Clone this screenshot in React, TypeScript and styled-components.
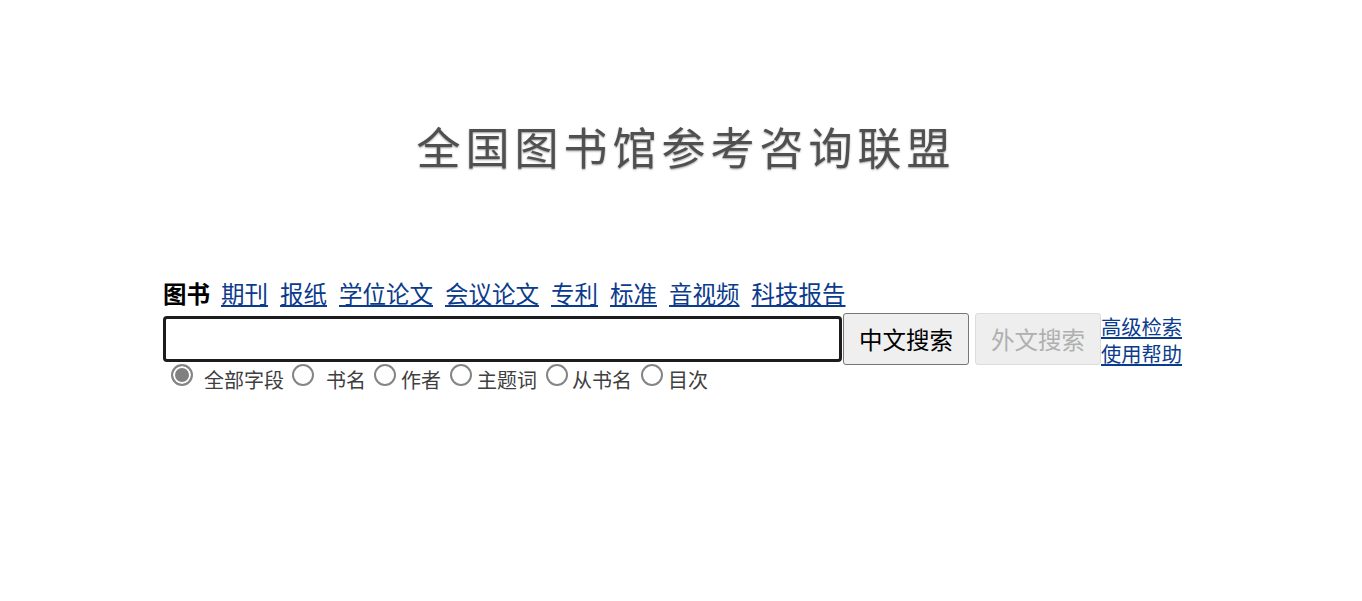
import React from 'react'
import styled, { createGlobalStyle } from 'styled-components'

const CJK = `"Liberation Sans", "Noto Sans CJK SC", sans-serif`

const channels = ['期刊', '报纸', '学位论文', '会议论文', '专利', '标准', '音视频', '科技报告']

const fields = [
	{ label: '全部字段', labelGap: 11, after: 8, checked: true, left: 8 },
	{ label: '书名', labelGap: 12, after: 8, checked: false, left: 0 },
	{ label: '作者', labelGap: 5, after: 9, checked: false, left: 0 },
	{ label: '主题词', labelGap: 5, after: 9, checked: false, left: 0 },
	{ label: '从书名', labelGap: 4, after: 9, checked: false, left: 0 },
	{ label: '目次', labelGap: 5, after: 0, checked: false, left: 0 },
]

const App: React.FC = () => {
	return (
		<Page>
			<GlobalStyle />
			<LogoRow>
				<Logo>全国图书馆参考咨询联盟</Logo>
			</LogoRow>
			<SearchArea>
				<Channels>
					<Current>图书</Current>
					{channels.map((c) => (
						<ChannelLink href="#" key={c}>
							{c}
						</ChannelLink>
					))}
				</Channels>
				<SearchRow>
					<SearchInput type="text" />
					<SearchButton type="button">中文搜索</SearchButton>
					<SearchButton type="button" disabled>
						外文搜索
					</SearchButton>
					<SideLinks>
						<SideLink href="#">高级检索</SideLink>
						<SideLink href="#">使用帮助</SideLink>
					</SideLinks>
				</SearchRow>
				<FieldRow>
					{fields.map((f) => (
						<Field key={f.label} $after={f.after} $left={f.left}>
							<Radio type="radio" name="field" defaultChecked={f.checked} />
							<FieldLabel $gap={f.labelGap}>{f.label}</FieldLabel>
						</Field>
					))}
				</FieldRow>
			</SearchArea>
		</Page>
	)
}

const GlobalStyle = createGlobalStyle`
	html, body {
		margin: 0;
		padding: 0;
		background: #fff;
	}
`

const Page = styled.div`
	width: 1362px;
	height: 601px;
	overflow: hidden;
	font-family: ${CJK};
`

const LogoRow = styled.div`
	display: flex;
	justify-content: center;
	padding: 122px 0 0 5px;
	height: 155px;
	box-sizing: content-box;
`

const Logo = styled.div`
	font-size: 44px;
	line-height: 56px;
	height: 56px;
	letter-spacing: 5px;
	margin-right: -5px;
	color: #505050;
	text-shadow: 0 1px 2px rgba(0, 0, 0, 0.4);
	filter: blur(0.7px);
`

const SearchArea = styled.div`
	padding-left: 163px;
`

const Channels = styled.div`
	display: flex;
	gap: 12px;
	font-size: 23.5px;
	line-height: 36px;
	height: 36px;
`

const Current = styled.b`
	color: #000;
	margin-right: -1px;
`

const ChannelLink = styled.a`
	color: #0b3b8c;
	text-decoration: underline;
`

const SearchRow = styled.div`
	display: flex;
	align-items: flex-start;
`

const SearchInput = styled.input`
	box-sizing: border-box;
	width: 679px;
	height: 46px;
	margin-top: 3px;
	border: 3px solid #1c1c1c;
	border-radius: 4px;
	background: #fff;
	outline: none;
`

const SearchButton = styled.button`
	box-sizing: border-box;
	width: 126px;
	height: 52px;
	margin-left: ${(p) => (p.disabled ? '6px' : '1px')};
	padding: 0;
	border: 1px solid ${(p) => (p.disabled ? '#dcdcdc' : '#767676')};
	border-radius: 3px;
	background: ${(p) => (p.disabled ? '#eeeeee' : '#efefef')};
	color: ${(p) => (p.disabled ? '#b0b0b0' : '#000')};
	font-family: ${CJK};
	font-size: 23.5px;
`

const SideLinks = styled.div`
	display: flex;
	flex-direction: column;
	padding-top: 2px;
`

const SideLink = styled.a`
	color: #0b3b8c;
	font-size: 20.25px;
	line-height: 27px;
	text-decoration: underline;
`

const FieldRow = styled.div`
	display: flex;
	align-items: flex-start;
	margin-top: -5px;
`

const Field = styled.label<{ $after: number; $left: number }>`
	display: flex;
	align-items: flex-start;
	margin-left: ${(p) => p.$left}px;
	margin-right: ${(p) => p.$after}px;
`

const Radio = styled.input`
	appearance: none;
	box-sizing: border-box;
	width: 22px;
	height: 22px;
	margin: 0;
	border: 2px solid #858585;
	border-radius: 50%;
	background: #fff;

	&:checked {
		background: #808080;
		box-shadow: inset 0 0 0 2px #fff;
	}
`

const FieldLabel = styled.span<{ $gap: number }>`
	margin-left: ${(p) => p.$gap}px;
	margin-top: 4px;
	color: #404040;
	font-size: 20px;
	line-height: 26px;
`

export default App
